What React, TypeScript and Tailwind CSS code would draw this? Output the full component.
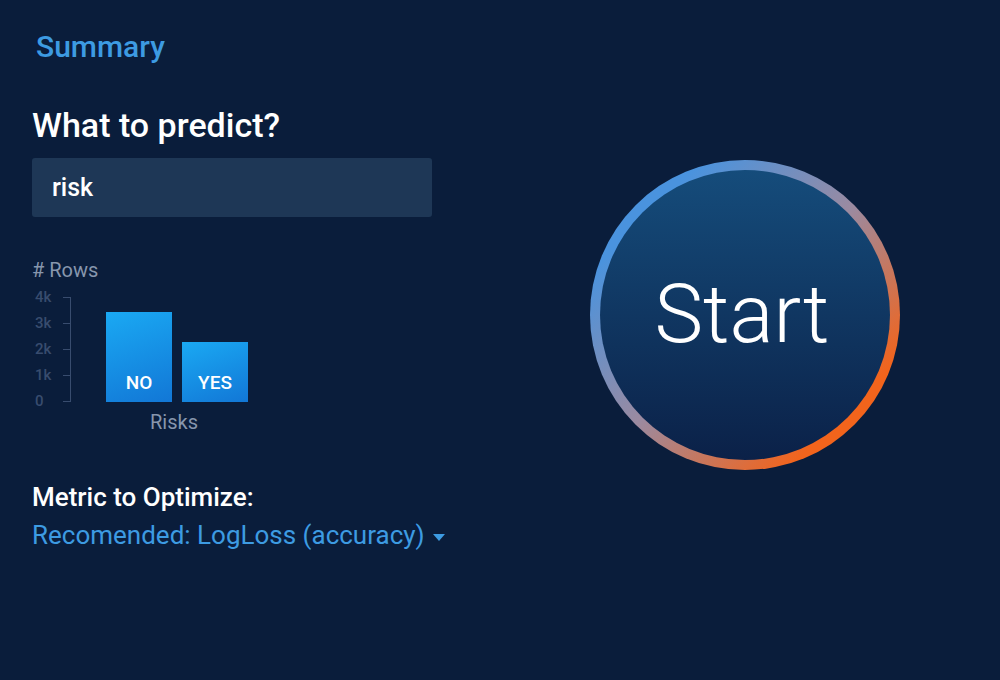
import { useState } from 'react';

const ticks = ['4k', '3k', '2k', '1k', '0'];

const bars = [
  { label: 'NO', height: 90 },
  { label: 'YES', height: 60 },
];

const RowsChart = () => (
  <div className="mt-[41px]">
    <p className="text-[20px] leading-6 text-[#8796ad]"># Rows</p>
    <div className="mt-[15px] flex items-end">
      {/* y axis */}
      <div className="relative h-[105px] w-[40px]">
        {ticks.map((t, i) => (
          <div
            key={t}
            className="absolute left-0 flex w-[40px] items-center"
            style={{ top: i * 26 - 9 }}
          >
            <span className="ml-[3px] w-[28px] text-[15px] font-medium leading-[18px] text-[#384c6e]">{t}</span>
            <span className="h-px w-[8px] bg-[#384c6e]" />
          </div>
        ))}
        <div className="absolute left-[38px] top-0 h-[105px] w-[1px] bg-[#384c6e]" />
      </div>
      <div className="ml-[34px] flex h-[103px] items-end gap-[10px]">
        {bars.map((b) => (
          <div
            key={b.label}
            className="flex w-[66px] items-end justify-center bg-[linear-gradient(160deg,#1aa9f3,#1277d6)] pb-[7px]"
            style={{ height: b.height }}
          >
            <span className="text-[19px] font-medium leading-6 text-white">{b.label}</span>
          </div>
        ))}
      </div>
    </div>
    <p className="ml-[118px] mt-[8px] text-[20px] leading-6 text-[#8796ad]">Risks</p>
  </div>
);

export default function App() {
  const [target, setTarget] = useState('risk');

  return (
    <div className="flex h-[680px] w-[1000px] bg-[#0a1d3b] font-['Roboto',sans-serif]">
      {/* settings column */}
      <div className="w-[590px] pl-[32px] pt-[29px]">
        <h2 className="pl-[4px] text-[30px] font-medium leading-9 text-[#3d9be2]">Summary</h2>
        <h1 className="mt-[40px] text-[34px] font-medium leading-10 text-white">What to predict?</h1>
        <input
          value={target}
          onChange={(e) => setTarget(e.target.value)}
          className="mt-[13px] block h-[59px] w-[400px] rounded-[3px] bg-[#1e3756] px-[20px] text-[25px] font-medium text-white outline-none"
        />
        <RowsChart />
        <p className="mt-[47px] text-[26px] font-medium leading-8 text-white">Metric to Optimize:</p>
        <button className="mt-[6px] flex items-center gap-[8px] text-[26px] leading-8 text-[#3d9be2]">
          Recomended: LogLoss (accuracy)
          <svg width="12" height="7" viewBox="0 0 12 7" className="mt-[4px]">
            <path d="M0 0h12L6 7z" fill="#3d9be2" />
          </svg>
        </button>
      </div>

      {/* start button */}
      <div className="pt-[160px]">
        <button className="h-[310px] w-[310px] rounded-full bg-[linear-gradient(135deg,#4a93de_18%,#9b8aa0_50%,#f2641c_82%)] p-[10px]">
          <div className="flex h-full w-full items-center justify-center rounded-full bg-[linear-gradient(180deg,#154c7b,#0b2148)]">
            <span className="-ml-[6px] -mt-[3px] text-[82px] font-light leading-none text-white">Start</span>
          </div>
        </button>
      </div>
    </div>
  );
}
